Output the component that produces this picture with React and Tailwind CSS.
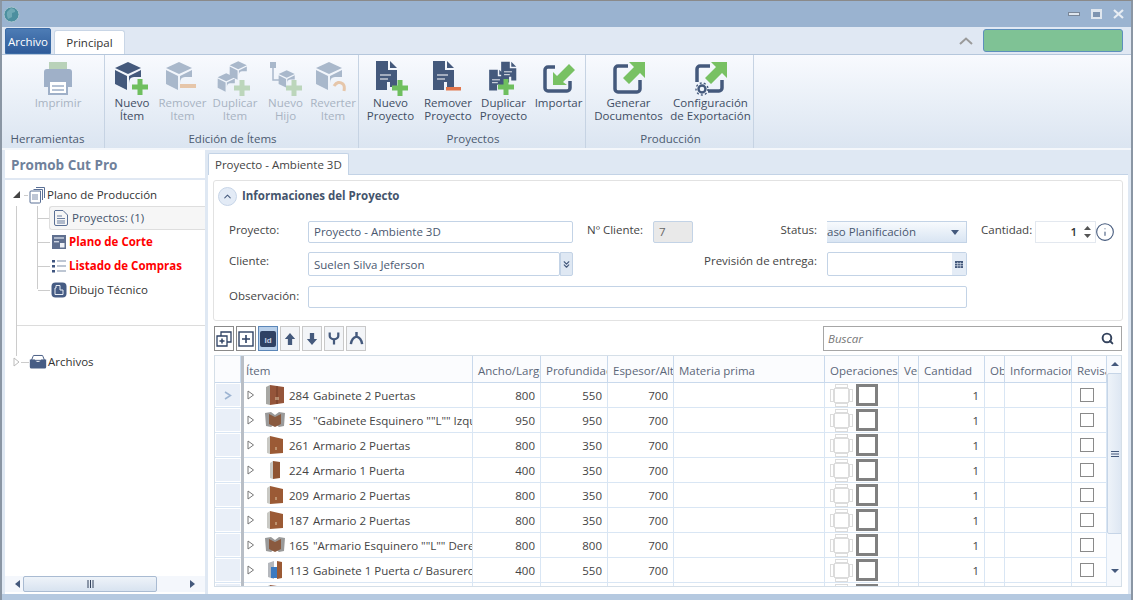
import { ChevronUp, ChevronsDown, Search, Info } from "lucide-react";

const NAVY = "#44597c";
const GREEN = "#6fbf5f";

// ribbon icons
function Cube({ c = NAVY }) {
  return (
    <>
      <path d="M14 2 L27 8 L14 14 L1 8Z" fill={c} />
      <path d="M1 10 L13 16 V30 L1 24Z" fill={c} />
      <path d="M15 16 L27 10 V17 H20 Q15 17 15 23Z" fill={c} />
    </>
  );
}
function Plus({ c = GREEN, x = 26, y = 27 }) {
  return <path d={`M${x - 2.5} ${y - 8} h5 v5.5 h5.5 v5 h-5.5 v5.5 h-5 v-5.5 h-5.5 v-5 h5.5z`} fill={c} />;
}
function Doc({ c = NAVY, x = 0, y = 0, s = 1 }) {
  return (
    <g transform={`translate(${x} ${y}) scale(${s})`}>
      <path d="M3 1 H15 V10 H24 V27 H17 V22 H14 V30 H3Z" fill={c} />
      <path d="M17 1 L24 8 H17Z" fill={c} />
      <path d="M7 15 H18 M7 19 H15" stroke="#fff" strokeWidth="1.2" />
    </g>
  );
}
function RibbonIcon({ children, w = 36 }) {
  return (
    <svg width={w} height="36" viewBox="0 0 36 36" className="block">
      {children}
    </svg>
  );
}
const ICONS = {
  printer: (
    <RibbonIcon>
      <rect x="9" y="2" width="18" height="10" fill="#b9d2b9" />
      <path d="M4 12 a3 3 0 0 1 3 -3 H29 a3 3 0 0 1 3 3 V27 H4Z" fill="#9fb0c8" />
      <rect x="9" y="21" width="18" height="13" fill="#fff" stroke="#9fb0c8" strokeWidth="2" />
      <path d="M12 26 H24 M12 30 H24" stroke="#9fb0c8" strokeWidth="1.5" />
    </RibbonIcon>
  ),
  newItem: (
    <RibbonIcon>
      <Cube />
      <Plus />
    </RibbonIcon>
  ),
  removeItem: (
    <RibbonIcon>
      <Cube c="#a9b8cb" />
      <rect x="15" y="24" width="16" height="4" fill="#e6c6aa" />
    </RibbonIcon>
  ),
  dupItem: (
    <RibbonIcon>
      <g transform="translate(12 0) scale(.66)">
        <Cube c="#a9b8cb" />
      </g>
      <g transform="translate(0 12) scale(.66)">
        <Cube c="#a9b8cb" />
      </g>
      <Plus c="#bcd6bb" x="25" y="28" />
    </RibbonIcon>
  ),
  newChild: (
    <RibbonIcon>
      <rect x="2" y="2" width="6" height="6" fill="#a9b8cb" />
      <path d="M5 8 V20 H11" stroke="#a9b8cb" strokeWidth="1.5" fill="none" />
      <g transform="translate(10 9) scale(.62)">
        <Cube c="#a9b8cb" />
      </g>
      <Plus c="#bcd6bb" x="26" y="28" />
    </RibbonIcon>
  ),
  revert: (
    <RibbonIcon>
      <Cube c="#a9b8cb" />
      <path d="M19 26 q4 -6 9 -2 q2 2 1 7" stroke="#e6c6aa" strokeWidth="3" fill="none" />
    </RibbonIcon>
  ),
  newDoc: (
    <RibbonIcon>
      <Doc />
      <Plus x="27" y="28" />
    </RibbonIcon>
  ),
  removeDoc: (
    <RibbonIcon>
      <Doc />
      <rect x="16" y="27" width="15" height="3.5" fill="#e2764c" />
    </RibbonIcon>
  ),
  dupDoc: (
    <RibbonIcon>
      <Doc x="13" y="1" s=".72" />
      <Doc x="1" y="9" s=".72" />
      <Plus x="20" y="27" />
    </RibbonIcon>
  ),
  importDoc: (
    <RibbonIcon>
      <path d="M14 7 H7 a3 3 0 0 0 -3 3 V28 a3 3 0 0 0 3 3 H26 a3 3 0 0 0 3 -3 V21" stroke={NAVY} strokeWidth="3.5" fill="none" />
      <path d="M12 25 V12 L16 16 L28 4 L34 10 L22 22 L26 25Z" fill="#78c163" />
    </RibbonIcon>
  ),
  exportDoc: (
    <RibbonIcon>
      <path d="M17 6 H7 a3 3 0 0 0 -3 3 V29 a3 3 0 0 0 3 3 H26 a3 3 0 0 0 3 -3 V20" stroke={NAVY} strokeWidth="3.5" fill="none" />
      <path d="M34 2 V18 L29 13 L18 24 L12 18 L23 7 L18 2Z" fill="#78c163" />
    </RibbonIcon>
  ),
  config: (
    <RibbonIcon>
      <path d="M17 6 H7 a3 3 0 0 0 -3 3 V22 M15 31 H26 a3 3 0 0 0 3 -3 V20" stroke={NAVY} strokeWidth="3.5" fill="none" />
      <path d="M34 2 V18 L29 13 L18 24 L12 18 L23 7 L18 2Z" fill="#78c163" />
      <circle cx="9" cy="29" r="3.5" fill="none" stroke={NAVY} strokeWidth="2.4" />
      <circle cx="9" cy="29" r="6" fill="none" stroke={NAVY} strokeWidth="1.4" strokeDasharray="2 2.2" />
    </RibbonIcon>
  ),
};

const GROUPS = [
  {
    label: "Herramientas",
    width: "w-[98px]",
    labelClass: "pr-[16px]",
    buttons: [{ lines: ["Imprimir"], icon: "printer", off: true, w: "w-[98px] pl-[4px]" }],
  },
  {
    label: "Edición de Ítems",
    width: "w-[252px]",
    buttons: [
      { lines: ["Nuevo", "Ítem"], icon: "newItem", w: "w-[50px]" },
      { lines: ["Remover", "Item"], icon: "removeItem", off: true, w: "w-[51px]" },
      { lines: ["Duplicar", "Item"], icon: "dupItem", off: true, w: "w-[54px]" },
      { lines: ["Nuevo", "Hijo"], icon: "newChild", off: true, w: "w-[47px]" },
      { lines: ["Reverter", "Item"], icon: "revert", off: true, w: "w-[48px]" },
    ],
  },
  {
    label: "Proyectos",
    width: "w-[225px]",
    buttons: [
      { lines: ["Nuevo", "Proyecto"], icon: "newDoc", w: "w-[59px]" },
      { lines: ["Remover", "Proyecto"], icon: "removeDoc", w: "w-[56px]" },
      { lines: ["Duplicar", "Proyecto"], icon: "dupDoc", w: "w-[55px]" },
      { lines: ["Importar"], icon: "importDoc", w: "w-[55px]" },
    ],
  },
  {
    label: "Producción",
    width: "w-[166px]",
    buttons: [
      { lines: ["Generar", "Documentos"], icon: "exportDoc", w: "w-[81px]" },
      { lines: ["Configuración", "de Exportación"], icon: "config", w: "w-[83px]" },
    ],
  },
];

function RibbonButton({ lines, icon, off, w }) {
  return (
    <div className={`${w} flex flex-col items-center pt-[5px] shrink-0`}>
      <div className="h-[36px]">{ICONS[icon]}</div>
      <div className={`leading-[13px] text-center whitespace-nowrap ${off ? "text-[#a8b3c2]" : "text-[#3f4d63]"}`}>
        {lines.map((l) => (
          <div key={l}>{l}</div>
        ))}
      </div>
    </div>
  );
}

function Ribbon() {
  return (
    <div className="h-[96px] flex gap-[2px] pl-[5px] bg-gradient-to-b from-[#f8fafe] to-[#dbe5f1] border-t border-[#b5c7dc] border-b-2 border-b-[#f4f7fb]">
      {GROUPS.map((g) => (
        <div key={g.label} className={`${g.width} h-[93px] flex flex-col border-r border-[#c6d3e3] shrink-0`}>
          <div className="flex flex-1">
            {g.buttons.map((b) => (
              <RibbonButton key={b.icon} {...b} />
            ))}
          </div>
          <div className={`h-[17px] leading-[16px] text-center text-[#4b5a70] ${g.labelClass || ""}`}>{g.label}</div>
        </div>
      ))}
    </div>
  );
}

// tree icons
function TreeIcon({ type }) {
  const s = { width: 18, height: 18, viewBox: "0 0 18 18", className: "shrink-0" };
  if (type === "stack")
    return (
      <svg {...s}>
        <path d="M8 1.5 H16.5 V12 M5.5 3.5 H14.5 V14 M2 6 a1 1 0 0 1 1 -1 H12.5 V16 a1 1 0 0 1 -1 1 H3 a1 1 0 0 1 -1 -1Z" fill="none" stroke="#5a7096" strokeWidth="1" />
        <path d="M4 9 H10 M4 11 H10 M4 13 H10" stroke="#5a7096" strokeWidth=".8" />
      </svg>
    );
  if (type === "doc")
    return (
      <svg {...s}>
        <path d="M3 1.5 H11 L15.5 6 V15 a1.5 1.5 0 0 1 -1.5 1.5 H4 A1.5 1.5 0 0 1 2.5 15 V2Z" fill="none" stroke="#5a7096" strokeWidth="1" />
        <path d="M5 7 H10 M5 9.5 H13 M5 12 H13 M5 14 H13" stroke="#5a7096" strokeWidth=".9" />
      </svg>
    );
  if (type === "plan")
    return (
      <svg {...s}>
        <rect x="2" y="2" width="14" height="14" fill="#5f6f8f" />
        <path d="M4 5 H14" stroke="#cfd6e2" strokeWidth="1.4" />
        <rect x="10" y="10" width="4.5" height="4.5" fill="#eef1f6" />
        <rect x="4" y="8" width="5" height="1.4" fill="#cfd6e2" />
      </svg>
    );
  if (type === "list")
    return (
      <svg {...s}>
        <path d="M2 3 h3 v2.5 h-3z M2 8 h3 v2.5 h-3z M2 13 h3 v2.5 h-3z" fill="#3f5580" />
        <path d="M7 4 H16 M7 9 H16 M7 14 H16" stroke="#7d8da8" strokeWidth="1.2" />
      </svg>
    );
  if (type === "draw")
    return (
      <svg {...s}>
        <rect x="1.5" y="1.5" width="15" height="15" rx="4" fill="#465c84" />
        <path d="M6 4.5 H10 V9 H13 V13.5 H5 V7 H6Z" fill="none" stroke="#e8edf5" strokeWidth="1" />
      </svg>
    );
  return (
    <svg {...s} width="18" viewBox="0 0 22 18">
      <path d="M3 7 L5 2 a1 1 0 0 1 1 -1 H16 a1 1 0 0 1 1 1 L19 7Z" fill="#fff" stroke="#465c84" strokeWidth="1.2" />
      <path d="M1 6 H7 Q8 9 11 9 Q14 9 15 6 H21 V15 a2 2 0 0 1 -2 2 H3 a2 2 0 0 1 -2 -2Z" fill="#465c84" />
    </svg>
  );
}

function Sidebar() {
  const rows = [
    { icon: "plan", text: "Plano de Corte", red: true },
    { icon: "list", text: "Listado de Compras", red: true },
    { icon: "draw", text: "Dibujo Técnico" },
  ];
  return (
    <aside className="w-[200px] shrink-0 bg-white flex flex-col">
      <div className="h-[29px] leading-[29px] pl-[6px] text-[13.5px] font-bold text-[#70819b] border-b-2 border-[#e0e8f3] mt-[1px]">Promob Cut Pro</div>
      <div className="flex-1 pt-[3px] overflow-hidden">
        <div className="flex items-center h-[24px] pl-[7px]">
          <svg width="12" height="12" viewBox="0 0 12 12" className="shrink-0">
            <path d="M1 9 L8 2 V9Z" fill="#444" />
          </svg>
          <span className="w-[4px] h-px bg-[#ccc] shrink-0" />
          <TreeIcon type="stack" />
          <span className="ml-[1px] text-[#333]">Plano de Producción</span>
        </div>
        <div className="ml-[11px] border-l border-[#ccc] h-[150px] mt-[-1px]">
          <div className="ml-[20px] border-l border-[#ccc] h-[83px]">
            <div className="flex items-center h-[24px]">
              <span className="w-[11px] h-px bg-[#ccc] shrink-0" />
              <div className="flex-1 flex items-center h-[24px] pl-[2px] bg-[#f6f6f6] border border-r-0 border-[#dedede] rounded-l-[3px]">
                <TreeIcon type="doc" />
                <span className="ml-[2px] text-[#44546c]">Proyectos: (1)</span>
              </div>
            </div>
            {rows.map((r) => (
              <div key={r.text} className="flex items-center h-[24px]">
                <span className="w-[12px] h-px bg-[#ccc] shrink-0" />
                <TreeIcon type={r.icon} />
                <span className={`ml-[1px] whitespace-nowrap ${r.red ? "font-bold text-[#ff0000]" : "text-[#333]"}`}>{r.text}</span>
              </div>
            ))}
          </div>
          <div className="h-px bg-[#dcdcdc] mt-[36px]" />
        </div>
        <div className="flex items-center h-[24px] pl-[8px] mt-[-6px]">
          <svg width="8" height="10" viewBox="0 0 8 10" className="shrink-0">
            <path d="M1 1 L6 5 L1 9Z" fill="#fff" stroke="#bbb" />
          </svg>
          <span className="w-[8px] h-px bg-[#ccc] shrink-0" />
          <TreeIcon type="box" />
          <span className="ml-[1px] text-[#333]">Archivos</span>
        </div>
      </div>
      <div className="h-[16px] mb-[2px] flex items-center bg-[#f4f7fc]">
        <svg width="18" height="16" viewBox="0 0 18 16" className="shrink-0">
          <path d="M15 4 V12 L10 8Z" fill="#44597c" />
        </svg>
        <div className="w-[134px] h-[16px] flex items-center justify-center bg-gradient-to-b from-[#eef3f9] to-[#d8e3f0] border border-[#a9bbd2] rounded-[2px]">
          <svg width="7" height="8" viewBox="0 0 7 8">
            <path d="M1 0 V8 M3.5 0 V8 M6 0 V8" stroke="#33425c" />
          </svg>
        </div>
        <div className="flex-1" />
        <svg width="18" height="16" viewBox="0 0 18 16" className="shrink-0">
          <path d="M3 4 V12 L8 8Z" fill="#44597c" />
        </svg>
      </div>
    </aside>
  );
}

const inputCls = "h-[22px] bg-white border border-[#c3d3e6] rounded-[2px] shrink-0 leading-[20px] text-[#4a5870] px-[5px]";
const labelCls = "text-[#444] leading-[16px] shrink-0 pt-[1px]";

function ProjectForm() {
  return (
    <div className="h-[141px] border border-[#e2e2e2] rounded-[3px] mx-[5px] mt-[5px] bg-white flex flex-col">
      <div className="flex items-center pl-[4px] h-[30px]">
        <span className="w-[19px] h-[19px] rounded-full bg-[#e3ebf6] border border-[#c7d5e8] flex items-center justify-center shrink-0">
          <ChevronUp size={11} strokeWidth={2.2} color="#44597c" />
        </span>
        <span className="ml-[5px] font-bold text-[#44546c]">Informaciones del Proyecto</span>
      </div>
      <div className="flex items-start mt-[10px] h-[22px] pl-[15px]">
        <span className={`${labelCls} w-[79px]`}>Proyecto:</span>
        <div className={`${inputCls} w-[265px]`}>Proyecto - Ambiente 3D</div>
        <span className={`${labelCls} ml-[14px] w-[66px]`}>Nº Cliente:</span>
        <div className={`${inputCls} w-[40px] !bg-[#e9e9e9] text-[#666]`}>7</div>
        <span className={`${labelCls} w-[124px] text-right`}>Status:</span>
        <div className="ml-[10px] w-[140px] h-[22px] shrink-0 flex items-center justify-between overflow-hidden bg-gradient-to-b from-[#f7fafd] to-[#d9e5f3] border-y border-r border-[#c3d3e6] pr-[7px] text-[#4a5870]">
          <span className="whitespace-nowrap">aso Planificación</span>
          <svg width="8" height="5" viewBox="0 0 8 5">
            <path d="M0 0 H8 L4 5Z" fill="#44597c" />
          </svg>
        </div>
        <span className={`${labelCls} ml-[14px] w-[54px]`}>Cantidad:</span>
        <div className="w-[61px] h-[22px] shrink-0 flex items-center justify-end border border-[#e3e8ef] pr-[3px] text-[#333]">
          <span className="font-semibold mr-[6px]">1</span>
          <svg width="9" height="14" viewBox="0 0 9 14">
            <path d="M4.5 1 L8 5 H1Z M4.5 13 L8 9 H1Z" fill="#555" />
          </svg>
        </div>
        <Info size={20} strokeWidth={1.3} color="#44597c" className="ml-[-1px] mt-[1px] shrink-0" />
      </div>
      <div className="flex items-start mt-[9px] h-[24px] pl-[15px]">
        <span className={`${labelCls} w-[79px]`}>Cliente:</span>
        <div className={`${inputCls} !h-[24px] w-[252px] leading-[24px]`}>Suelen Silva Jeferson</div>
        <div className="w-[13px] h-[24px] shrink-0 bg-[#dfe8f3] border border-[#c3d3e6] rounded-r-[2px] flex items-center justify-center">
          <ChevronsDown size={11} strokeWidth={2.5} color="#44597c" />
        </div>
        <span className={`${labelCls} w-[244px] text-right`}>Previsión de entrega:</span>
        <div className="ml-[10px] w-[140px] h-[24px] shrink-0 flex justify-end bg-white border border-[#c3d3e6] rounded-[2px]">
          <div className="w-[14px] bg-[#e4ecf6] flex items-center justify-center">
            <svg width="8" height="7" viewBox="0 0 8 7">
              <rect width="8" height="7" fill="#44597c" />
              <path d="M0 2.5 H8 M0 4.7 H8 M2.7 1 V7 M5.3 1 V7" stroke="#e4ecf6" strokeWidth=".6" />
            </svg>
          </div>
        </div>
      </div>
      <div className="flex items-start mt-[10px] h-[22px] pl-[15px]">
        <span className={`${labelCls} w-[79px] pt-[2px]`}>Observación:</span>
        <div className={`${inputCls} w-[659px]`} />
      </div>
    </div>
  );
}

const TOOLS = [
  <svg key="a" width="16" height="16" viewBox="0 0 16 16"><path d="M5 1 H15 V11 H11 V5 H5Z M1 5 H11 V15 H1Z" fill="#fff" stroke="#2f4264" strokeWidth="1.3" /><path d="M3.5 10 H8.5 M6 7.5 V12.5" stroke="#2f4264" strokeWidth="1.5" /></svg>,
  <svg key="b" width="16" height="16" viewBox="0 0 16 16"><rect x="1" y="1" width="14" height="14" fill="#fff" stroke="#2f4264" strokeWidth="1.4" /><path d="M4 8 H12 M8 4 V12" stroke="#2f4264" strokeWidth="1.6" /></svg>,
  <svg key="c" width="16" height="16" viewBox="0 0 16 16"><rect x="0" y="0" width="16" height="16" rx="2" fill="#2f4264" /><text x="8" y="11.5" fontSize="8" fontWeight="700" textAnchor="middle" fill="#c8d4e6" fontFamily="Liberation Sans, sans-serif">Id</text></svg>,
  <svg key="d" width="12" height="14" viewBox="0 0 14 16"><path d="M7 1 L13 8 H9.5 V15 H4.5 V8 H1Z" fill="#44597c" /></svg>,
  <svg key="e" width="12" height="14" viewBox="0 0 14 16"><path d="M7 15 L13 8 H9.5 V1 H4.5 V8 H1Z" fill="#44597c" /></svg>,
  <svg key="f" width="12" height="15" viewBox="0 0 14 16"><path d="M2 1 V5 Q2 8 7 9 Q12 8 12 5 V1 M7 9 V15" fill="none" stroke="#44597c" strokeWidth="2.6" /></svg>,
  <svg key="g" width="15" height="15" viewBox="0 0 16 16"><path d="M8 1 V6 M8 6 Q3 7 2 14 M8 6 Q13 7 14 14" fill="none" stroke="#44597c" strokeWidth="2.6" /></svg>,
];

function Toolbar() {
  return (
    <div className="flex items-center gap-[2px] h-[25px] mt-[5px] mx-[6px]">
      {TOOLS.map((t, i) => (
        <div key={i} className={`w-[20px] h-[25px] flex items-center justify-center border ${i === 2 ? "bg-[#b9d0ea] border-[#5c87b8]" : i < 2 ? "bg-white border-[#8a8a8a]" : "bg-[#f3f5f8] border-[#c9c9c9]"}`}>
          {t}
        </div>
      ))}
      <div className="ml-auto w-[299px] h-[25px] flex items-center justify-between border border-[#a6a6a6] pl-[4px] pr-[7px]">
        <span className="italic text-[#777]">Buscar</span>
        <Search size={13} strokeWidth={3.6} color="#33425c" />
      </div>
    </div>
  );
}

// the columns of the grid table
const COLS = "grid-cols-[26px_3px_229px_68px_67px_66px_151px_74px_20px_66px_20px_67px_35px]";

const ITEMS = [
  ["284", "Gabinete 2 Puertas", "800", "550", "700", "two"],
  ["35", "\"Gabinete Esquinero \"\"L\"\" Izquierdo\"", "950", "950", "700", "corner"],
  ["261", "Armario 2 Puertas", "800", "350", "700", "wide"],
  ["224", "Armario 1 Puerta", "400", "350", "700", "one"],
  ["209", "Armario 2 Puertas", "800", "350", "700", "wide"],
  ["187", "Armario 2 Puertas", "800", "350", "700", "wide"],
  ["165", "\"Armario Esquinero \"\"L\"\" Derecho\"", "800", "800", "700", "corner"],
  ["113", "Gabinete 1 Puerta c/ Basurero", "400", "550", "700", "bin"],
  ["98", "Gabinete 2 Puertas", "800", "550", "700", "two"],
];

function Furniture({ type }) {
  const s = { width: 22, height: 22, viewBox: "0 0 22 22", className: "shrink-0" };
  if (type === "corner")
    return (
      <svg {...s}>
        <path d="M1 4 L7 3 L11 6 L15 3 L21 4 L20 17 L15 18 L11 15 L7 18 L2 17Z" fill="#9a9a9a" />
        <path d="M5 5 L11 8 L17 5 V15 L11 18 L5 15Z" fill="#8a5a3f" />
      </svg>
    );
  if (type === "one")
    return (
      <svg {...s}>
        <path d="M6 4 L9 2 V20 L6 19Z" fill="#c9c9c4" />
        <path d="M9 2 L16 3 V19 L9 20Z" fill="#8f5432" />
      </svg>
    );
  if (type === "bin")
    return (
      <svg {...s}>
        <path d="M4 4 L10 2 V20 L4 18Z" fill="#b5b8bd" />
        <rect x="7" y="8" width="6" height="11" fill="#3c7ac0" />
        <path d="M13 2 L18 3 V19 L13 20Z" fill="#9b5a35" />
      </svg>
    );
  if (type === "wide")
    return (
      <svg {...s}>
        <path d="M3 4 L6 2 V20 L3 19Z" fill="#c9c9c4" />
        <path d="M6 2 L19 5 V19 L6 20Z" fill="#9b5a35" />
        <path d="M12 13 V16" stroke="#e0c9a8" />
      </svg>
    );
  return (
    <svg {...s}>
      <path d="M2 3 L6 1 V21 L2 20Z" fill="#a8a8a4" />
      <path d="M6 1 L20 3 V19 L6 21Z" fill="#95553a" />
      <path d="M13 2 V20" stroke="#6e3c26" />
      <path d="M12 13 V16 M14 13 V16" stroke="#e0c9a8" />
    </svg>
  );
}

function OpsIcons() {
  return (
    <div className="flex items-center gap-[3px] pl-[5px] h-full">
      <svg width="23" height="23" viewBox="0 0 23 23" className="shrink-0">
        <g fill="#fff" stroke="#dcdcdc">
          <rect x="5.5" y=".5" width="12" height="3" />
          <rect x="5.5" y="19.5" width="12" height="3" />
          <rect x=".5" y="5.5" width="3" height="12" />
          <rect x="19.5" y="5.5" width="3" height="12" />
          <rect x="4.5" y="4.5" width="14" height="14" />
        </g>
      </svg>
      <span className="w-[22px] h-[22px] border-[3px] border-[#808080] shrink-0" />
    </div>
  );
}

const cell = "border-r border-b border-[#d9e6f4] h-[25px] overflow-hidden whitespace-nowrap";
const numCell = `${cell} leading-[26px] text-right pr-[5px] text-[#444]`;
const headCell = "border-r border-b border-[#c9d9ec] h-[27px] leading-[29px] pl-[5px] overflow-hidden whitespace-nowrap text-[#5b6779] bg-[#fbfcfe]";

function GridRow({ item, current }) {
  const [id, name, w, d, h, type] = item;
  return (
    <div className={`grid ${COLS}`}>
      <div className="h-[25px] p-[1px] border-b border-[#d9e6f4] bg-white">
        <div className="h-full bg-[#e9eff8] flex items-center justify-center">
          {current && (
            <svg width="8" height="9" viewBox="0 0 8 9">
              <path d="M1 1 L6.5 4.5 L1 8" fill="none" stroke="#9db4d2" strokeWidth="1.5" />
            </svg>
          )}
        </div>
      </div>
      <div className="bg-[#b8bec6]" />
      <div className={`${cell} flex items-center pl-[3px] text-[#444]`}>
        <svg width="8" height="10" viewBox="0 0 8 10" className="shrink-0">
          <path d="M1 1 L6.5 5 L1 9Z" fill="#fff" stroke="#777" />
        </svg>
        <span className="ml-[9px] shrink-0">
          <Furniture type={type} />
        </span>
        <span className="ml-[3px] w-[24px] shrink-0 whitespace-nowrap pt-[1px]">{id}</span>
        <span className="pt-[1px]">{name}</span>
      </div>
      <div className={numCell}>{w}</div>
      <div className={numCell}>{d}</div>
      <div className={numCell}>{h}</div>
      <div className={cell} />
      <div className={cell}>
        <OpsIcons />
      </div>
      <div className={cell} />
      <div className={numCell}>1</div>
      <div className={cell} />
      <div className={cell} />
      <div className={`${cell} flex items-center justify-center pr-[4px]`}>
        <span className="w-[14px] h-[14px] border border-[#8a8a8a] bg-white" />
      </div>
    </div>
  );
}

function ItemsTable() {
  return (
    <div className="flex mx-[6px] mt-[4px] h-[232px] border border-[#d5dfe8] overflow-hidden">
      <div className="w-[892px] shrink-0 overflow-hidden">
        <div className={`grid ${COLS}`}>
          <div className={headCell} />
          <div className="bg-[#b8bec6] h-[27px]" />
          <div className={`${headCell} !pl-[2px]`}>Ítem</div>
          <div className={headCell}>Ancho/Largo</div>
          <div className={headCell}>Profundidad</div>
          <div className={headCell}>Espesor/Alto</div>
          <div className={headCell}>Materia prima</div>
          <div className={headCell}>Operaciones</div>
          <div className={headCell}>Ver</div>
          <div className={headCell}>Cantidad</div>
          <div className={headCell}>Obs</div>
          <div className={headCell}>Informacion</div>
          <div className={headCell}>Revisado</div>
        </div>
        {ITEMS.map((it, i) => (
          <GridRow key={it[0]} item={it} current={i === 0} />
        ))}
      </div>
      <div className="w-[16px] shrink-0 flex flex-col items-center bg-[#f6f9fd]">
        <svg width="8" height="17" viewBox="0 0 8 17" className="shrink-0">
          <path d="M0 10 L4 6 L8 10Z" fill="#44597c" />
        </svg>
        <div className="w-[16px] h-[161px] flex items-center justify-center bg-gradient-to-r from-[#eef3f9] to-[#dce6f2] border border-[#c6d5e7] rounded-[2px]">
          <svg width="8" height="6" viewBox="0 0 8 6">
            <path d="M0 .5 H8 M0 3 H8 M0 5.5 H8" stroke="#44597c" />
          </svg>
        </div>
        <div className="flex-1" />
        <svg width="8" height="17" viewBox="0 0 8 17" className="shrink-0 mb-[6px]">
          <path d="M0 6 L4 10 L8 6Z" fill="#44597c" />
        </svg>
      </div>
    </div>
  );
}

export default function App() {
  return (
    <div className="w-[1133px] h-[600px] overflow-hidden flex flex-col bg-[#dfe8f3] text-[11.5px] font-['Open_Sans','Noto_Sans',sans-serif] border-t border-[#8a8a8a] border-x-2 border-x-[#8a96a4]">
      {/* title bar */}
      <div className="h-[26px] shrink-0 flex items-center justify-between bg-[#9ab3d0] pl-[1px] pr-[7px]">
        <svg width="17" height="17" viewBox="0 0 17 17">
          <circle cx="8.5" cy="8.5" r="7.5" fill="#4c8f9f" stroke="#a9c4cf" />
          <path d="M8 2 Q13 3 12 6 L9 7 L9 11 L5 13 Q3 9 4 6Z" fill="#6fa9b5" />
        </svg>
        <div className="flex items-center gap-[11px]">
          <span className="w-[12px] h-[4px] bg-[#dfe6ee] border border-[#7a8798]" />
          <span className="w-[11px] h-[10px] border-2 border-t-[3px] border-[#dfe6ee] bg-[#7e94b0]" />
          <svg width="11" height="10" viewBox="0 0 11 10">
            <path d="M1 1 L10 9 M10 1 L1 9" stroke="#e8edf3" strokeWidth="2.2" />
          </svg>
        </div>
      </div>
      {/* tabs */}
      <div className="h-[27px] shrink-0 flex items-end pl-[3px] pr-[8px] bg-[#e0e8f3]">
        <div className="w-[46px] h-[26px] leading-[26px] text-center text-white bg-gradient-to-b from-[#4d7cb5] to-[#2f5c9a] border border-[#3a6aa5] rounded-t-[2px]">Archivo</div>
        <div className="ml-[3px] w-[71px] h-[24px] leading-[24px] text-center text-[#333] bg-white border-x border-t border-[#c9d6e6] rounded-t-[3px]">Principal</div>
        <div className="ml-auto flex items-center h-[27px]">
          <svg width="14" height="8" viewBox="0 0 14 8" className="mr-[10px]">
            <path d="M1 7 L7 1.5 L13 7" fill="none" stroke="#9a9a9a" strokeWidth="2" />
          </svg>
          <div className="w-[140px] h-[23px] bg-[#7fc295] border border-[#5d8fbd] rounded-[3px]" />
        </div>
      </div>
      <Ribbon />
      {/* body */}
      <div className="flex-1 min-h-0 flex px-[3px] border-b-[6px] border-[#b5c9e0] gap-[3px]">
        <Sidebar />
        <main className="flex-1 min-w-0 flex flex-col">
          <div className="h-[24px] mt-[1px] shrink-0 flex items-end border-b border-[#c3d3e6]">
            <div className="h-[22px] leading-[21px] px-[6px] text-[#444] bg-white border-x border-t border-[#c3d3e6] rounded-t-[2px] mb-[-1px]">Proyecto - Ambiente 3D</div>
          </div>
          <div className="flex-1 min-h-0 bg-white flex flex-col">
            <ProjectForm />
            <Toolbar />
            <ItemsTable />
          </div>
        </main>
      </div>
    </div>
  );
}
